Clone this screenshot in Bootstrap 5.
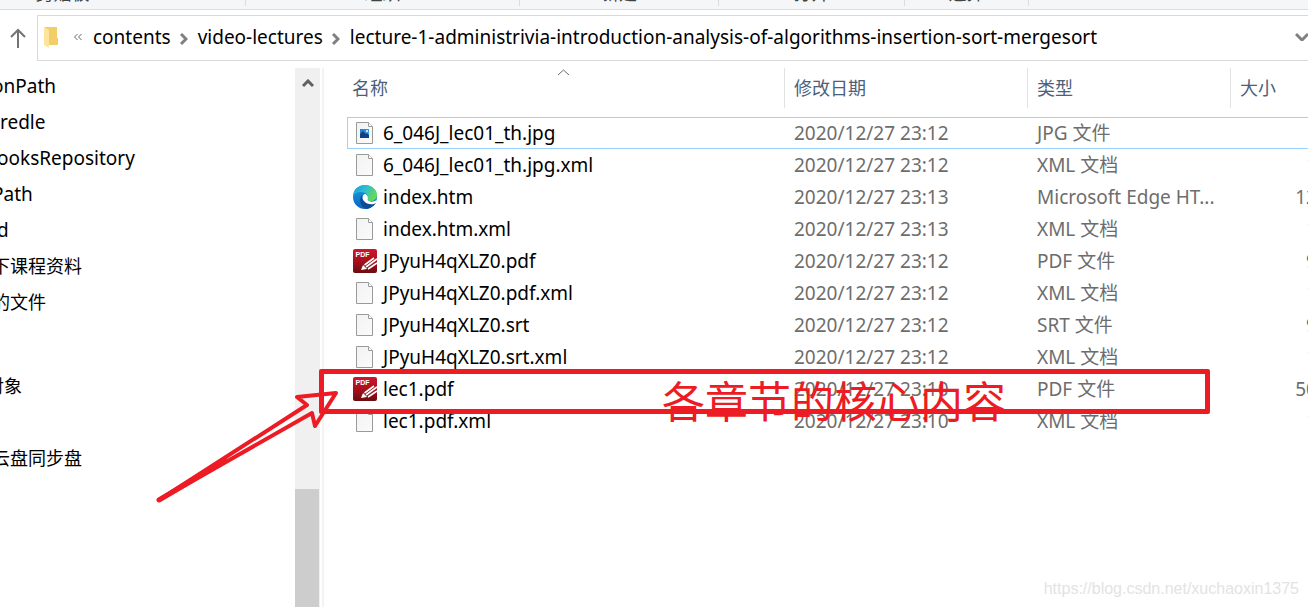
<!DOCTYPE html>
<html lang="zh-CN">
<head>
<meta charset="utf-8">
<meta name="viewport" content="width=device-width, initial-scale=1">
<title>mergesort</title>
<link href="https://cdn.jsdelivr.net/npm/bootstrap@5.3.0/dist/css/bootstrap.min.css" rel="stylesheet">
<style>
  body { font-family: "Noto Sans", "Noto Sans CJK SC", sans-serif; font-size: 18px; line-height: 24px; color: #000; background: #fff; }
  .ribbon { height: 10px; background: #f5f6f7; border-bottom: 1px solid #dadbdc; color: #444; }
  .ribbon-group { height: 6px; border-right: 1px solid #dcdddf; line-height: 24px; }
  .ribbon-group span { margin-top: -19px; }
  .g1 { width: 246px; padding-right: 120px; } .g2 { width: 274px; } .g3 { width: 199px; } .g4 { width: 186px; } .g5 { width: 124px; }
  .address { margin: 5px -6px 7px 0; height: 46px; }
  .up-btn { width: 37px; }
  .path-box { border: 1px solid #d9d9d9; padding: 0 4px 3px 5px; }
  .path-box a { color: #000; font-size: 19px; }
  .crumb-sep { width: 27px; text-align: center; flex: none; }
  .side { width: 295px; }
  .side li { height: 36px; line-height: 36px; white-space: nowrap; }
  .side a { color: #000; }
  .side .latin { font-size: 19px; }
  .tree-a { margin-left: -3px; } .tree-b { margin-left: -8px; } .tree-c { margin-left: -14px; }
  .side .tree-gap { height: 12px; }
  .track { width: 25px; background: #f0f0f0; }
  .track button { height: 30px; }
  .thumb { width: 24px; height: 118px; background: #cdcdcd; }
  .split { width: 2px; margin: 0 23px 0 2px; background: #f3f3f3; }
  .files { table-layout: fixed; width: 1004px; border-collapse: separate; border-spacing: 0; white-space: nowrap; }
  .files th { height: 40px; padding: 0 0 0 9px; font-weight: 400; color: #4c607a; border-right: 1px solid #e2e2e2; }
  .files th:first-child { padding-left: 5px; }
  .files td { height: 32px; padding: 0 0 0 9px; color: #6d6d6d; border: 1px solid transparent; border-width: 1px 0; font-size: 19px; line-height: 24px; }
  .files td:first-child { padding-left: 5px; color: #000; border-left-width: 1px; }
  .files td:last-child { text-align: right; padding-right: 5px; }
  .files .active-row td { border-color: #99d1ff; }
  .files .spacer td { height: 9px; border: 0; }
  .files svg { width: 24px; height: 24px; margin-right: 6px; flex: none; }
  .files .sort-mark { height: 10px; }
  .ink { left: 0; top: 0; pointer-events: none; }
  .ink-box { left: 319px; top: 369px; width: 891px; height: 45px; border: 5px solid #ed1c24; border-radius: 2px; }
  .ink-text { left: 662px; top: 372px; font-size: 43px; line-height: 60px; color: #ed1c24; white-space: nowrap; }
  .watermark { right: 9px; bottom: 6px; font: 16px/24px "Liberation Sans", sans-serif; color: #e3e3e3; }
</style>
</head>
<body>
<svg class="position-absolute" width="0" height="0" aria-hidden="true">
  <linearGradient id="paper" x1="0" y1="0" x2="1" y2="1"><stop offset="0" stop-color="#f1f2f3"/><stop offset="1" stop-color="#fbfbfb"/></linearGradient>
  <linearGradient id="pdfRed" x1="0" y1="0" x2="0" y2="1"><stop offset="0" stop-color="#d0172b"/><stop offset=".5" stop-color="#a70f1c"/><stop offset="1" stop-color="#6c0c10"/></linearGradient>
  <linearGradient id="edgeTop" x1="0" y1="0" x2="1" y2=".5"><stop offset="0" stop-color="#1598d8"/><stop offset=".5" stop-color="#2cbfd0"/><stop offset="1" stop-color="#63d957"/></linearGradient>
  <linearGradient id="edgeLeft" x1="0" y1="0" x2="0" y2="1"><stop offset="0" stop-color="#1b9ee2"/><stop offset="1" stop-color="#0b64c0"/></linearGradient>
  <linearGradient id="photo" x1="0" y1="0" x2="1" y2="1"><stop offset="0" stop-color="#1a78cf"/><stop offset="1" stop-color="#43b4f5"/></linearGradient>
  <symbol id="i-doc" viewBox="0 0 24 24"><path d="M3.500 1.500h12l4 4v17h-16z" fill="url(#paper)" stroke="#9a9a9a"/><path d="M15.500 1.500v4h4" fill="#fff" stroke="#9a9a9a"/></symbol>
  <symbol id="i-jpg" viewBox="0 0 24 24"><path d="M3.500 1.500h12l4 4v17h-16z" fill="url(#paper)" stroke="#9a9a9a"/><path d="M15.500 1.500v4h4" fill="#fff" stroke="#9a9a9a"/><rect x="7" y="8" width="9" height="9" fill="url(#photo)"/><path d="M7 13l3-3 3 3 1-1 2 2v3H7z" fill="#123f86"/><circle cx="14" cy="10" r="1" fill="#fff"/></symbol>
  <symbol id="i-pdf" viewBox="0 0 24 24"><rect width="24" height="24" rx="2" fill="url(#pdfRed)"/><text x="2.500" y="8" font-family="Liberation Sans" font-size="7" font-weight="700" fill="#fff">PDF</text><path d="M8 21l2-5 4 4z" fill="#fff"/><path d="M11.500 16L21 9M13 18l11-8M15 20l9-6" stroke="#fff" stroke-width="1.600"/></symbol>
  <symbol id="i-edge" viewBox="0 0 24 24"><circle cx="12" cy="12" r="12" fill="url(#edgeLeft)"/><path d="M0 12C0 4 6 0 12 0c7 0 12 5 12 10 0 4-3 6-6 6-3 0-5-1-4-3 1-2 0-6-6-6-4 0-7 2-8 5z" fill="url(#edgeTop)"/><path d="M9 10c-4 5-1 13 5 14 4-1 7-3 9-6-8 3-14-1-14-8z" fill="#0d4c94"/><path d="M12 9c-3 1-3 5-1 7 3 4 9 4 12 2l.500-3c-3 2.500-8 2-9-.500 1-2 0-4-2-5.500z" fill="#fff"/></symbol>
</svg>

<div class="vh-100 d-flex flex-column overflow-hidden position-relative">
  <div class="ribbon d-flex overflow-hidden flex-shrink-0">
    <div class="ribbon-group g1 d-flex justify-content-center"><span>剪贴板</span></div>
    <div class="ribbon-group g2 d-flex justify-content-center"><span>组织</span></div>
    <div class="ribbon-group g3 d-flex justify-content-center"><span>新建</span></div>
    <div class="ribbon-group g4 d-flex justify-content-center"><span>打开</span></div>
    <div class="ribbon-group g5 d-flex justify-content-center"><span>选择</span></div>
  </div>

  <nav class="address d-flex flex-shrink-0" aria-label="路径">
    <button class="up-btn btn border-0 p-0" aria-label="向上"><svg width="18" height="22" viewBox="0 0 18 22" fill="none" stroke="#737373" stroke-width="2"><path d="M8 20V2M1 9l7-7 7 7"/></svg></button>
    <div class="path-box flex-grow-1 d-flex align-items-center">
      <svg width="16" height="24" viewBox="0 0 16 24" class="flex-shrink-0"><path d="M2 2h12v11h1v7H2z" fill="#f2cd68"/><path d="M1 2l5 3v18l-5-3z" fill="#ffe59b"/></svg>
      <svg width="34" height="12" viewBox="0 0 34 12" class="flex-shrink-0" fill="none" stroke="#666" stroke-width="1"><path d="M18.500 3l-3 3 3 3M22.500 3l-3 3 3 3"/></svg>
      <a href="#" class="text-decoration-none">contents</a>
      <span class="crumb-sep"><svg width="8" height="12" viewBox="0 0 8 12" fill="none" stroke="#808080" stroke-width="3"><path d="M1 1l5 5-5 5"/></svg></span>
      <a href="#" class="text-decoration-none">video-lectures</a>
      <span class="crumb-sep"><svg width="8" height="12" viewBox="0 0 8 12" fill="none" stroke="#808080" stroke-width="3"><path d="M1 1l5 5-5 5"/></svg></span>
      <a href="#" class="text-decoration-none text-nowrap">lecture-1-administrivia-introduction-analysis-of-algorithms-insertion-sort-mergesort</a>
      <button class="btn border-0 p-0 ms-auto d-flex" aria-label="展开"><svg width="14" height="9" viewBox="0 0 14 9" fill="none" stroke="#808080" stroke-width="3"><path d="M1 2l6 6 6-6"/></svg></button>
    </div>
  </nav>

  <main class="d-flex flex-grow-1 overflow-hidden">
    <ul class="side list-unstyled m-0 overflow-hidden flex-shrink-0">
      <li class="tree-b latin"><a href="#" class="text-decoration-none">onPath</a></li>
      <li class="latin"><a href="#" class="text-decoration-none">redle</a></li>
      <li class="tree-a latin"><a href="#" class="text-decoration-none">ooksRepository</a></li>
      <li class="tree-b latin"><a href="#" class="text-decoration-none">Path</a></li>
      <li class="tree-a latin"><a href="#" class="text-decoration-none">d</a></li>
      <li class="tree-b"><a href="#" class="text-decoration-none">下课程资料</a></li>
      <li class="tree-b"><a href="#" class="text-decoration-none">的文件</a></li>
      <li></li><li class="tree-gap"></li>
      <li class="tree-c"><a href="#" class="text-decoration-none">对象</a></li>
      <li></li>
      <li class="tree-b"><a href="#" class="text-decoration-none">云盘同步盘</a></li>
    </ul>
    <div class="track d-flex flex-column flex-shrink-0">
      <button class="btn border-0 rounded-0 p-0 d-flex align-items-center justify-content-center" aria-label="向上滚动"><svg width="12" height="9" viewBox="0 0 12 9" fill="none" stroke="#606060" stroke-width="3"><path d="M1 7l5-5 5 5"/></svg></button>
      <div class="thumb mt-auto"></div>
    </div>
    <div class="split flex-shrink-0"></div>
    <div class="flex-grow-1 overflow-hidden">
      <table class="files">
        <colgroup><col style="width:438px"><col style="width:243px"><col style="width:203px"><col style="width:120px"></colgroup>
        <thead><tr>
          <th scope="col" class="position-relative">名称<svg class="sort-mark position-absolute top-0 start-50 translate-middle-x m-0" viewBox="0 0 24 10" fill="none" stroke="#666"><path d="M4 7l5.500-5L15 7"/></svg></th>
          <th scope="col">修改日期</th><th scope="col">类型</th><th scope="col">大小</th>
        </tr></thead>
        <tbody>
          <tr class="spacer"><td colspan="4"></td></tr>
          <tr class="active-row"><td><div class="d-flex"><svg><use href="#i-jpg"/></svg>6_046J_lec01_th.jpg</div></td><td>2020/12/27 23:12</td><td>JPG 文件</td><td></td></tr>
          <tr><td><div class="d-flex"><svg><use href="#i-doc"/></svg>6_046J_lec01_th.jpg.xml</div></td><td>2020/12/27 23:12</td><td>XML 文档</td><td>1 KB</td></tr>
          <tr><td><div class="d-flex"><svg><use href="#i-edge"/></svg>index.htm</div></td><td>2020/12/27 23:13</td><td>Microsoft Edge HT...</td><td>12 KB</td></tr>
          <tr><td><div class="d-flex"><svg><use href="#i-doc"/></svg>index.htm.xml</div></td><td>2020/12/27 23:13</td><td>XML 文档</td><td>1 KB</td></tr>
          <tr><td><div class="d-flex"><svg><use href="#i-pdf"/></svg>JPyuH4qXLZ0.pdf</div></td><td>2020/12/27 23:12</td><td>PDF 文件</td><td>9 KB</td></tr>
          <tr><td><div class="d-flex"><svg><use href="#i-doc"/></svg>JPyuH4qXLZ0.pdf.xml</div></td><td>2020/12/27 23:12</td><td>XML 文档</td><td>1 KB</td></tr>
          <tr><td><div class="d-flex"><svg><use href="#i-doc"/></svg>JPyuH4qXLZ0.srt</div></td><td>2020/12/27 23:12</td><td>SRT 文件</td><td>9 KB</td></tr>
          <tr><td><div class="d-flex"><svg><use href="#i-doc"/></svg>JPyuH4qXLZ0.srt.xml</div></td><td>2020/12/27 23:12</td><td>XML 文档</td><td>1 KB</td></tr>
          <tr><td><div class="d-flex"><svg><use href="#i-pdf"/></svg>lec1.pdf</div></td><td>2020/12/27 23:10</td><td>PDF 文件</td><td>50 KB</td></tr>
          <tr><td><div class="d-flex"><svg><use href="#i-doc"/></svg>lec1.pdf.xml</div></td><td>2020/12/27 23:10</td><td>XML 文档</td><td>1 KB</td></tr>
        </tbody>
      </table>
    </div>
  </main>

  <!-- hand-drawn notes over the window -->
  <div class="ink-box position-absolute"></div>
  <svg class="ink position-absolute" width="360" height="520" viewBox="0 0 360 520" fill="none" stroke="#ed1c24" stroke-width="4" stroke-linejoin="round"><path d="M159 500L307 405 297 397 336 393 315 426 312 413z"/><path d="M159 500L225 461" stroke-width="5" stroke-linecap="round"/></svg>
  <div class="ink-text position-absolute">各章节的核心内容</div>
  <div class="watermark position-absolute">https://blog.csdn.net/xuchaoxin1375</div>
</div>
<script src="https://cdn.jsdelivr.net/npm/bootstrap@5.3.0/dist/js/bootstrap.bundle.min.js"></script>
</body>
</html>
